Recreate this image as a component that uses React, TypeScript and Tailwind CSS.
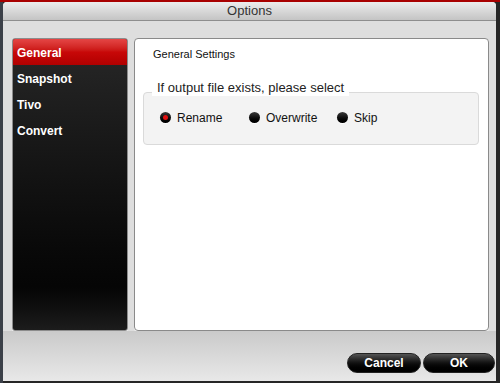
const font = { fontFamily: '"Liberation Sans", Arial, sans-serif' };

const Radio = ({ checked, label }: { checked?: boolean; label: string }) => (
  <div className="flex items-center gap-[6px]">
    <span className="flex h-[11px] w-[11px] items-center justify-center rounded-full bg-gradient-to-b from-[#3a3a3a] to-[#000] shadow-[0_1px_0_rgba(255,255,255,0.8)]">
      {checked && <span className="h-[5px] w-[5px] rounded-full bg-[#e01010]" />}
    </span>
    <span className="text-[12px] text-[#111]">{label}</span>
  </div>
);

const navItems = ["General", "Snapshot", "Tivo", "Convert"];

export default function App() {
  return (
    <div className="flex h-[383px] w-[500px] flex-col bg-[#262626]" style={font}>
      <div className="h-[2px] bg-[#a80000]" />
      <div className="flex flex-1">
        <div className="w-[3px] bg-[#3b4048]" />
        <div className="flex h-[379px] flex-1 flex-col overflow-hidden rounded-t-[4px] bg-[#dcdcdc]">
          {/* title bar */}
          <div className="flex h-[19px] items-center justify-center border-b border-[#8e8e8e] bg-gradient-to-b from-[#ececec] to-[#c4c4c4] text-[13px] text-[#333]">
            Options
          </div>

          <div className="flex gap-[6px] bg-[#dedede] pl-[9px] pr-[7px] pt-[17px]">
            {/* sidebar */}
            <div className="h-[293px] w-[116px] overflow-hidden rounded-[3px] border border-[#8c8c8c] bg-gradient-to-b from-[#282828] via-[#050505] via-[85%] to-[#1c1c1c] shadow-[0_1px_0_rgba(255,255,255,0.6)]">
              {navItems.map((item, i) => (
                <div
                  key={item}
                  className={
                    "flex h-[26px] items-center pl-[4px] pt-[1px] text-[12px] font-bold text-white " +
                    (i === 0 ? "bg-gradient-to-b from-[#e54545] via-[#c80808] to-[#b00000]" : "")
                  }
                >
                  {item}
                </div>
              ))}
            </div>

            {/* content */}
            <div className="h-[293px] flex-1 rounded-[4px] border border-[#8a8a8a] bg-white pl-[8px] pr-[9px] pt-[7px] shadow-[0_1px_0_rgba(255,255,255,0.7)]">
              <div className="pl-[10px] text-[11px] text-[#111]">General Settings</div>
              <div className="relative mt-[29px] h-[53px] rounded-[4px] border border-[#dadada] bg-[#f3f3f3]">
                <span className="absolute left-[8px] top-[-13px] bg-white px-[5px] text-[13px] leading-[16px] text-[#222]">
                  If output file exists, please select
                </span>
                <div className="flex items-center pl-[16px] pt-[16px]">
                  <div className="w-[89px]">
                    <Radio checked label="Rename" />
                  </div>
                  <div className="w-[88px]">
                    <Radio label="Overwrite" />
                  </div>
                  <Radio label="Skip" />
                </div>
              </div>
            </div>
          </div>

          {/* footer */}
          <div className="flex flex-1 items-start justify-end gap-[2px] bg-gradient-to-b from-[#cacaca] to-[#e8e8e8] pr-[1px] pt-[22px]">
            <button className="h-[20px] w-[74px] rounded-full border border-[#222] bg-gradient-to-b from-[#555] via-[#111] to-[#000] text-[12px] font-bold text-white">
              Cancel
            </button>
            <button className="h-[20px] w-[72px] rounded-full border border-[#222] bg-gradient-to-b from-[#555] via-[#111] to-[#000] text-[12px] font-bold text-white">
              OK
            </button>
          </div>
        </div>
        <div className="w-[4px] bg-[#262626]" />
      </div>
    </div>
  );
}
